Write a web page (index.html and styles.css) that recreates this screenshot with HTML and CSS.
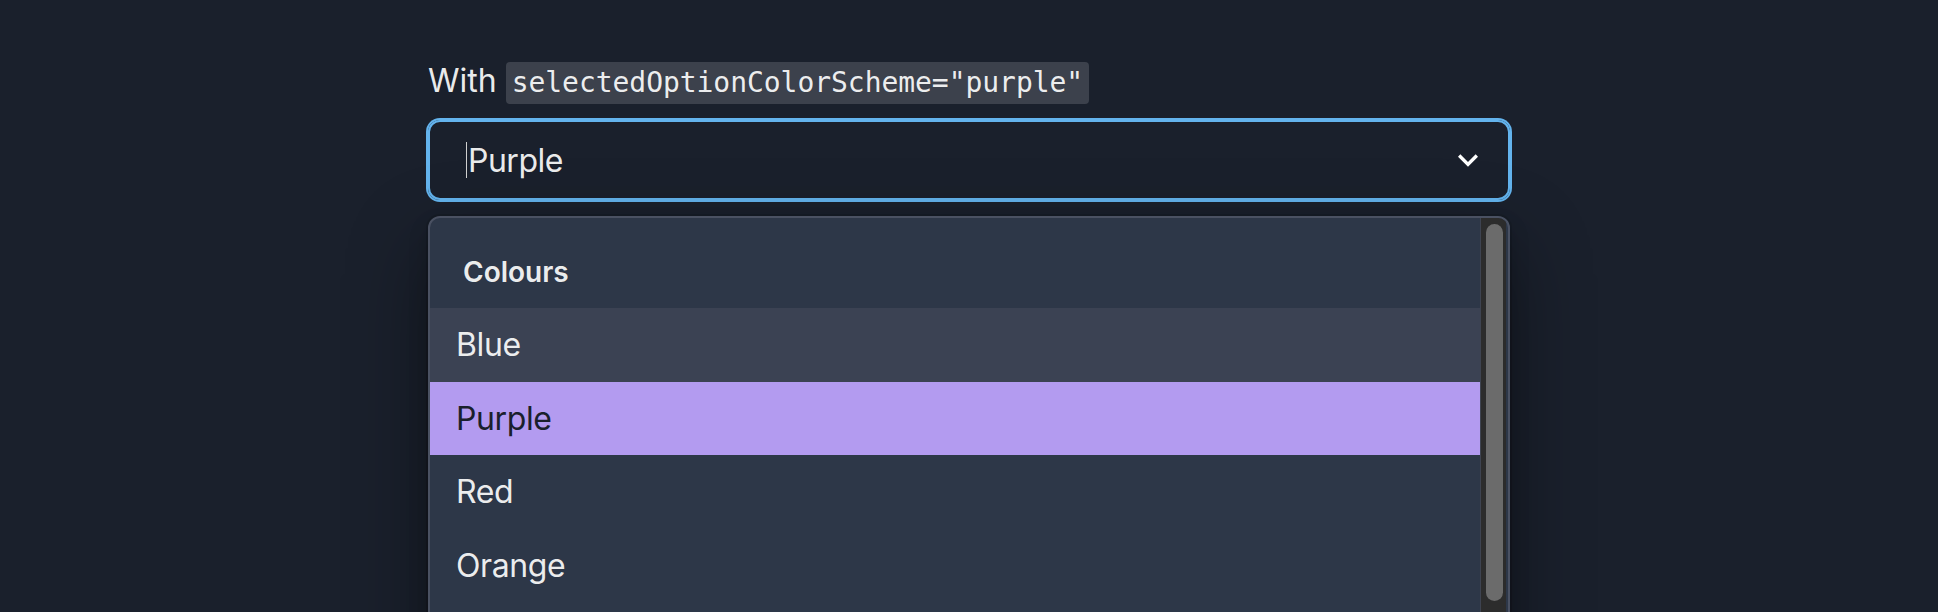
FILE: index.html
```html
<!DOCTYPE html>
<html>
<head>
  <title>Select colour scheme</title>
  <link rel="stylesheet" href="styles.css">
</head>
<body>
  <div class="demo">
    <p class="demoLabel">With <code class="inlineCode">selectedOptionColorScheme="purple"</code></p>

    <div class="select">
      <div class="selectControl">
        <div class="selectValue">
          <span class="caret"></span>
          <span>Purple</span>
        </div>
        <div class="selectIndicator">
          <svg viewBox="0 0 24 24" width="40" height="40">
            <path fill="currentColor" d="M16.59 8.59L12 13.17 7.41 8.59 6 10l6 6 6-6z"/>
          </svg>
        </div>
      </div>

      <div class="selectMenu">
        <div class="menuList">
          <div class="groupHeading">Colours</div>
          <div class="option focused">Blue</div>
          <div class="option selected">Purple</div>
          <div class="option">Red</div>
          <div class="option">Orange</div>
        </div>
        <div class="scrollTrack">
          <div class="scrollThumb"></div>
        </div>
      </div>
    </div>
  </div>
</body>
</html>
```

FILE: styles.css
```css
html, body {
  margin: 0;
  height: 100%;
  overflow: hidden;
}

body {
  background-color: #1A202C;
  color: rgba(255, 255, 255, 0.92);
  font-family: Inter, "Noto Sans", sans-serif;
}

.demo {
  width: 1082px;
  margin-left: calc(50% - 541px);
  padding-top: 57px;
}

.demoLabel {
  margin: 0 0 15px 0;
  font-size: 32px;
  line-height: 48px;
}

.inlineCode {
  display: inline-block;
  padding: 0 6px;
  border-radius: 4px;
  background-color: #3c414c;
  font-family: "DejaVu Sans Mono", "Liberation Mono", monospace;
  font-size: 28px;
  line-height: 42px;
  letter-spacing: -0.05px;
}

.selectControl {
  display: flex;
  align-items: center;
  height: 80px;
  box-sizing: border-box;
  border: 2px solid #63B3ED;
  border-radius: 12px;
  box-shadow: 0 0 0 2px #63B3ED;
}

.selectValue {
  flex: 1;
  display: flex;
  align-items: center;
  padding-left: 36px;
  font-size: 32px;
  letter-spacing: -0.5px;
}

.caret {
  width: 1px;
  height: 36px;
  margin-right: 1px;
  background-color: #d0d0d0;
}

.selectIndicator {
  display: flex;
  padding: 0 20px;
  color: #ffffff;
}

.selectMenu {
  display: flex;
  height: 600px;
  margin-top: 16px;
  border: 2px solid #4a5162;
  border-radius: 12px;
  overflow: hidden;
  background-color: #2D3748;
  box-shadow: 0 0 0 2px rgba(0, 0, 0, 0.1), 0 10px 20px rgba(0, 0, 0, 0.2), 0 30px 80px rgba(0, 0, 0, 0.4);
}

.menuList {
  flex: 1;
  padding-top: 8px;
}

.groupHeading {
  padding: 26px 33px 16px;
  font-size: 28px;
  font-weight: 600;
  line-height: 40px;
}

.option {
  padding: 1px 26px 0;
  height: 73.5px;
  box-sizing: border-box;
  font-size: 32px;
  line-height: 72.5px;
  letter-spacing: -0.4px;
}

.option.focused {
  background-color: #3b4253;
}

.option.selected {
  background-color: #B39BF0;
  color: #1A202C;
}

.scrollTrack {
  width: 26px;
  margin-right: 2px;
  padding: 6px 0 0 5px;
  box-sizing: border-box;
  border-left: 1px solid #3e4350;
  background-color: #2c2c2c;
}

.scrollThumb {
  width: 17px;
  height: 377px;
  border-radius: 9px;
  background-color: #6b6b6b;
}
```
